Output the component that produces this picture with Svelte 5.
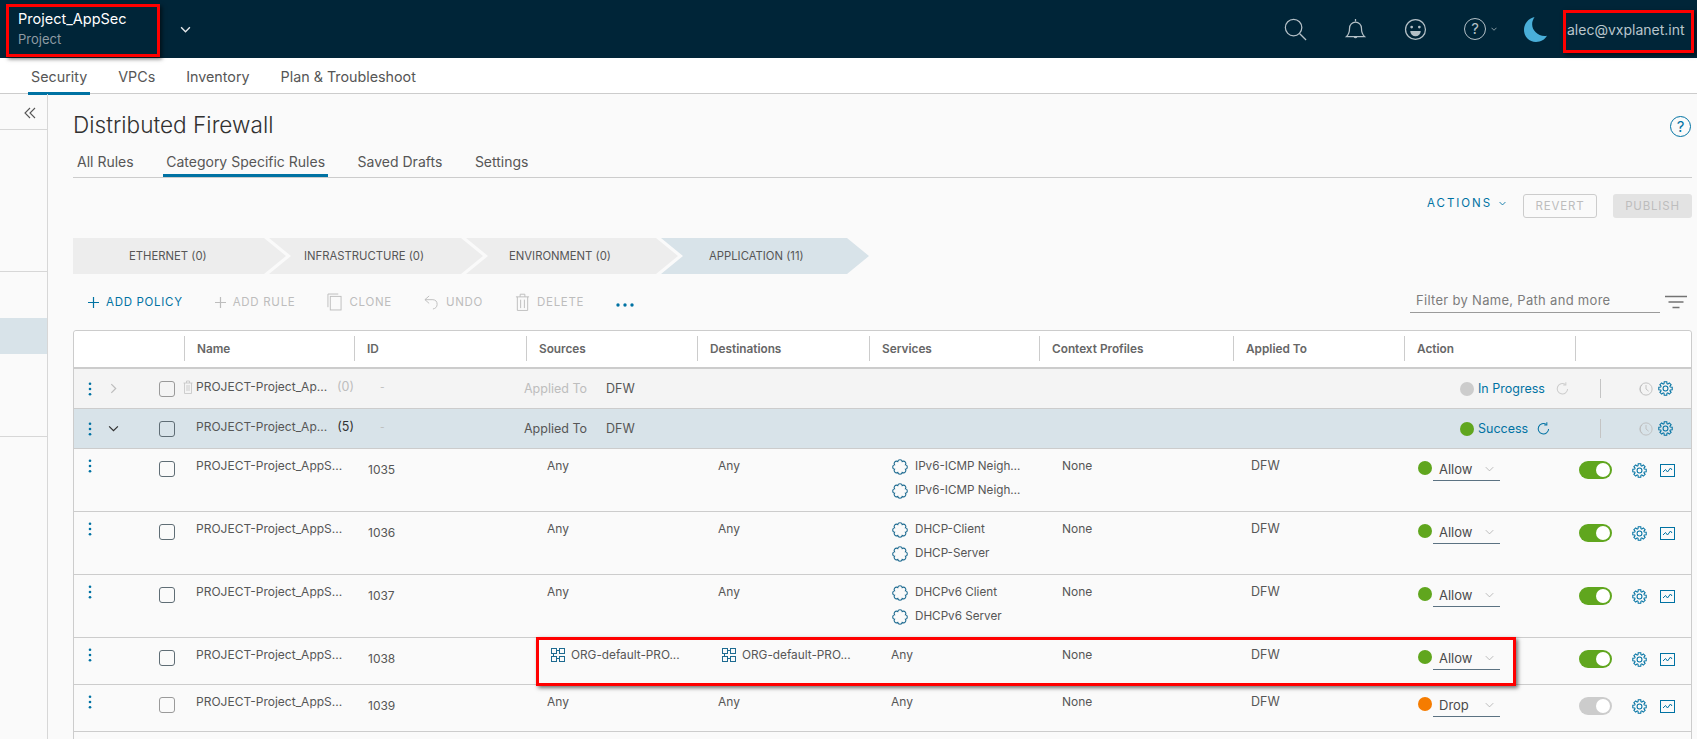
<script>
  function polar(cx, cy, r, a) {
    const t = (a * Math.PI) / 180;
    return `${(cx + r * Math.cos(t)).toFixed(2)} ${(cy + r * Math.sin(t)).toFixed(2)}`;
  }
  function gearPath() {
    let d = '';
    for (let i = 0; i < 8; i++) {
      const a = i * 45;
      d += `${i ? 'L' : 'M'}${polar(8, 8, 5.3, a - 17)} L${polar(8, 8, 7.3, a - 11)} L${polar(8, 8, 7.3, a + 11)} L${polar(8, 8, 5.3, a + 17)} `;
    }
    return d + 'Z';
  }
  function scallopPath() {
    let d = '';
    const n = 8;
    for (let i = 0; i <= n; i++) {
      const p = polar(8, 8, 5.9, (i * 360) / n + 22.5);
      d += i === 0 ? `M${p} ` : `A2.3 2.3 0 0 1 ${p} `;
    }
    return d + 'Z';
  }
  const gear = gearPath();
  const scallop = scallopPath();

  const navItems = ['Security', 'VPCs', 'Inventory', 'Plan & Troubleshoot'];
  const tabs = ['All Rules', 'Category Specific Rules', 'Saved Drafts', 'Settings'];
  const crumbs = [
    { label: 'ETHERNET (0)', cls: 'c1' },
    { label: 'INFRASTRUCTURE (0)', cls: 'c2' },
    { label: 'ENVIRONMENT (0)', cls: 'c3' },
    { label: 'APPLICATION (11)', cls: 'c4' }
  ];
  const columns = ['Name', 'ID', 'Sources', 'Destinations', 'Services', 'Context Profiles', 'Applied To', 'Action', ''];
  const rules = [
    { id: '1035', src: null, dst: null, svc: ['IPv6-ICMP Neigh…', 'IPv6-ICMP Neigh…'], action: 'Allow', on: true, size: 'tall' },
    { id: '1036', src: null, dst: null, svc: ['DHCP-Client', 'DHCP-Server'], action: 'Allow', on: true, size: 'tall' },
    { id: '1037', src: null, dst: null, svc: ['DHCPv6 Client', 'DHCPv6 Server'], action: 'Allow', on: true, size: 'tall' },
    { id: '1038', src: 'ORG-default-PRO...', dst: 'ORG-default-PRO...', svc: [], action: 'Allow', on: true, size: 'short' },
    { id: '1039', src: null, dst: null, svc: [], action: 'Drop', on: false, size: 'shorter' }
  ];
</script>

{#snippet dots()}
  <svg class="dots" viewBox="0 0 4 16"><circle cx="2" cy="2" r="1.5" /><circle cx="2" cy="8" r="1.5" /><circle cx="2" cy="14" r="1.5" /></svg>
{/snippet}
{#snippet gearIcon()}
  <svg class="gear" viewBox="0 0 16 16"><path d={gear} /><circle cx="8" cy="8" r="2.6" /></svg>
{/snippet}
{#snippet clock()}
  <svg class="clock" viewBox="0 0 16 16"><circle cx="8" cy="8" r="7" /><path d="M3.5 3.2A6.5 6.5 0 0 0 3.5 12.8" /><path d="M8 3.5V8l3 2.5" /></svg>
{/snippet}
{#snippet refresh()}
  <svg class="refresh" viewBox="0 0 14 14"><path d="M12.5 7.5A5.6 5.6 0 1 1 10 2.6" /><path d="M10.6 .4V3.2H7.8" /></svg>
{/snippet}
{#snippet chev(cls)}
  <svg class={cls} viewBox="0 0 12 8"><path d="M1 1.5l5 5 5-5" /></svg>
{/snippet}

<div class="shell">
  <header class="top">
    <div class="project">
      <div class="pname">Project_AppSec</div>
      <div class="ptype">Project</div>
    </div>
    {@render chev('pchev')}
    <div class="hicons">
      <svg class="hi" viewBox="0 0 24 24"><circle cx="10" cy="10" r="8.6" /><path d="M16.2 16.2L23 23" /></svg>
      <svg class="hi" viewBox="0 0 24 24"><path d="M12 1v2.4M2.5 19.5c2.4-2.2 3.3-4.3 3.3-9a6.2 6.2 0 0 1 12.4 0c0 4.7.9 6.8 3.3 9zM10.5 19.5a1.7 1.7 0 0 0 3 0" /></svg>
      <svg class="hi" viewBox="0 0 24 24"><circle cx="12" cy="12" r="10.4" /><circle class="solid" cx="8" cy="9.5" r="1.4" /><circle class="solid" cx="16" cy="9.5" r="1.4" /><path class="solid" d="M6.5 13.5h11a5.5 5.5 0 0 1-11 0z" /></svg>
      <div class="helpwrap">
        <span class="helpq">?</span>
        {@render chev('hchev')}
      </div>
      <svg class="moon" viewBox="0 0 24 26"><path d="M11 0C4.5 1.500 0 7 0 13.500 0 20.500 5.500 26 12.500 26 17.500 26 21.800 23.500 24 19.500 15.500 21 8.500 14.500 8.500 7.500 8.500 4.800 9.500 2.200 11 0z" /></svg>
    </div>
    <div class="user">alec@vxplanet.int</div>
  </header>

  <nav class="nav">
    {#each navItems as item, i}
      <span class="navitem" class:active={i === 0}>{item}</span>
    {/each}
  </nav>

  <div class="body">
    <aside class="side">
      <div class="collapse">
        <svg viewBox="0 0 12 12"><path d="M6 1L1 6l5 5M11 1L6 6l5 5" /></svg>
      </div>
      <div class="sblock a"></div>
      <div class="sblock b"><div class="shigh"></div></div>
    </aside>

    <main class="main">
      <div class="titlerow">
        <h1>Distributed Firewall</h1>
        <span class="bighelp">?</span>
      </div>
      <div class="tabs">
        {#each tabs as t, i}
          <span class="tab" class:active={i === 1}>{t}</span>
        {/each}
      </div>

      <div class="actions">
        <span class="actlink">ACTIONS {@render chev('achev')}</span>
        <span class="btn revert">REVERT</span>
        <span class="btn publish">PUBLISH</span>
      </div>

      <div class="crumbs">
        {#each crumbs as c}
          <div class="crumb {c.cls}">{c.label}</div>
        {/each}
      </div>

      <div class="toolbar">
        <span class="tool on">
          <svg class="plus" viewBox="0 0 11 11"><path d="M5.5 0v11M0 5.5h11" /></svg>ADD POLICY
        </span>
        <span class="tool">
          <svg class="plus" viewBox="0 0 11 11"><path d="M5.5 0v11M0 5.5h11" /></svg>ADD RULE
        </span>
        <span class="tool">
          <svg class="ticon" viewBox="0 0 16 19"><path d="M1 15V1h11" /><rect x="3.5" y="3.5" width="11.5" height="14.5" /></svg>CLONE
        </span>
        <span class="tool">
          <svg class="ticon" viewBox="0 0 16 19"><path d="M5.5 3L1 7l4.5 4M1 7h8.5a5 5 0 0 1 4.5 5c0 3-2 4.5-4.5 5" /></svg>UNDO
        </span>
        <span class="tool">
          <svg class="ticon" viewBox="0 0 16 19"><path d="M1 4h14M5.5 4V1.200h5V4M2.5 4v14.5h11V4M6 7v9M10 7v9" /></svg>DELETE
        </span>
        <svg class="more" viewBox="0 0 18 4"><circle cx="2" cy="2" r="1.700" /><circle cx="9" cy="2" r="1.700" /><circle cx="16" cy="2" r="1.700" /></svg>
        <div class="filter">Filter by Name, Path and more</div>
        <svg class="filtericon" viewBox="0 0 22 14"><path d="M0 1.5h22M3.5 7h15M7.5 12.5h7" /></svg>
      </div>

      <div class="table">
        <div class="grid head">
          <div class="hcell first"></div>
          {#each columns as c}
            <div class="hcell">{c}</div>
          {/each}
        </div>

        <div class="grid group progress">
          <div class="tools">{@render dots()}{@render chev('rowchev right')}<span class="check"></span></div>
          <div class="gname withtrash">
            <svg class="trash" viewBox="0 0 10 14"><path d="M.5 3h9M3.5 3V1h3v2M1.5 3v10.500h7V3M4 5v6M6 5v6" /></svg>
            <span class="gtext">PROJECT-Project_Ap...</span><span class="count">(0)</span>
          </div>
          <div class="gid">-</div>
          <div class="applied"><span class="al">Applied To</span><span class="av">DFW</span></div>
          <div class="spacer"></div>
          <div class="status"><span class="dot grey"></span><span class="stext">In Progress</span>{@render refresh()}</div>
          <div class="gtools"><span class="vr"></span>{@render clock()}{@render gearIcon()}</div>
        </div>

        <div class="grid group success">
          <div class="tools">{@render dots()}{@render chev('rowchev')}<span class="check strong"></span></div>
          <div class="gname">
            <span class="gtext">PROJECT-Project_Ap...</span><span class="count">(5)</span>
          </div>
          <div class="gid">-</div>
          <div class="applied"><span class="al">Applied To</span><span class="av">DFW</span></div>
          <div class="spacer"></div>
          <div class="status"><span class="dot green"></span><span class="stext">Success</span>{@render refresh()}</div>
          <div class="gtools"><span class="vr"></span>{@render clock()}{@render gearIcon()}</div>
        </div>

        {#each rules as r}
          <div class="grid rule {r.size}">
            <div class="tools">{@render dots()}<span></span><span class="check" class:strong={r.on} ></span></div>
            <div class="cell name">PROJECT-Project_AppS...</div>
            <div class="cell idc">{r.id}</div>
            {#if r.src}
              <div class="cell org"><svg class="orgi" viewBox="0 0 15 15"><path d="M1 1h5v5H1zM9 1h5v5H9zM1 9h5v5H1zM9 9h5v5H9zM6 3.5h3M6 11.5h3M3.500 6v3" /></svg>{r.src}</div>
              <div class="cell org"><svg class="orgi" viewBox="0 0 15 15"><path d="M1 1h5v5H1zM9 1h5v5H9zM1 9h5v5H1zM9 9h5v5H9zM6 3.5h3M6 11.5h3M3.500 6v3" /></svg>{r.dst}</div>
            {:else}
              <div class="cell">Any</div>
              <div class="cell">Any</div>
            {/if}
            {#if r.svc.length}
              <div class="cell svc">
                {#each r.svc as s}
                  <div class="svcline"><svg class="svci" viewBox="0 0 16 16"><path d={scallop} /></svg>{s}</div>
                {/each}
              </div>
            {:else}
              <div class="cell svcany">Any</div>
            {/if}
            <div class="cell ctx">None</div>
            <div class="cell app">DFW</div>
            <div class="actcell">
              <span class="dot" class:green={r.on} class:orange={!r.on}></span>
              <span class="select">{r.action}{@render chev('schev')}</span>
            </div>
            <div class="rtools">
              <span class="toggle" class:off={!r.on}></span>
              {@render gearIcon()}
              <svg class="chart" viewBox="0 0 15 13"><rect x=".5" y=".5" width="14" height="12" /><path d="M3 8l2.5-2.5L7.5 8l3-4 1.500 2" /></svg>
            </div>
          </div>
        {/each}
      </div>
    </main>
  </div>

  <div class="callout c-project"></div>
  <div class="callout c-user"></div>
  <div class="callout c-row"></div>
</div>

<style>
  :global(body) { margin: 0; }
  .shell {
    position: relative;
    width: 1697px;
    height: 739px;
    overflow: hidden;
    background: #fafafa;
    font-family: Inter, "Liberation Sans", sans-serif;
    color: #565656;
    font-size: 12px;
  }
  svg { display: block; flex: none; fill: none; }

  .top { height: 58px; background: #002538; display: flex; align-items: center; }
  .project { padding-left: 18px; width: 180px; box-sizing: border-box; }
  .pname { color: #fff; font-size: 14.5px; line-height: 20px; margin-top: -1px; }
  .ptype { color: #8e9ba3; font-size: 13px; line-height: 20px; }
  :global(.pchev) { width: 11px; height: 7px; stroke: #e6e9eb; stroke-width: 1.6; }
  .hicons { margin-left: 1093px; display: flex; align-items: center; }
  .hi { width: 23px; height: 23px; margin-right: 37px; stroke: #b4c0c7; stroke-width: 1.3; }
  .hi .solid { fill: #b4c0c7; stroke: none; }
  .helpwrap { display: flex; align-items: center; width: 60px; }
  .helpq {
    width: 20px; height: 20px; border: 1.3px solid #b4c0c7; border-radius: 50%;
    color: #b4c0c7; font-size: 15px; line-height: 20px; text-align: center;
  }
  :global(.hchev) { width: 6px; height: 4px; margin-left: 5px; stroke: #b4c0c7; stroke-width: 1.5; }
  .moon { width: 23px; height: 25px; fill: #49afd9; margin-right: 20px; }
  .user { color: #b9c5cc; font-size: 14px; white-space: nowrap; }

  .nav {
    height: 35px; background: #fff; border-bottom: 1px solid #ccc;
    display: flex; align-items: stretch; font-size: 14.3px;
  }
  .navitem { display: flex; align-items: center; padding: 0 3px; margin-right: 25px; border-bottom: 3px solid transparent; height: 32px; padding-top: 2px; box-sizing: content-box; }
  .navitem:first-child { margin-left: 28px; }
  .navitem.active { border-bottom-color: #0072a3; }

  .body { display: flex; height: 645px; }
  .side { width: 48px; flex: none; border-right: 1px solid #d7d7d7; box-sizing: border-box; }
  .collapse { height: 36px; border-bottom: 1px solid #d7d7d7; box-sizing: border-box; display: flex; align-items: center; justify-content: flex-end; padding-right: 11px; padding-top: 2px; }
  .collapse svg { width: 12px; height: 12px; stroke: #565656; stroke-width: 1.1; }
  .sblock.a { height: 142px; border-bottom: 1px solid #d7d7d7; box-sizing: border-box; }
  .sblock.b { height: 165px; padding-top: 46px; box-sizing: border-box; border-bottom: 1px solid #d7d7d7; }
  .shigh { height: 36px; background: #d8e3e9; }

  .main { flex: 1; min-width: 0; padding: 0 5px 0 25px; }
  .titlerow { height: 54px; box-sizing: border-box; padding-top: 6px; display: flex; align-items: center; justify-content: space-between; }
  h1 { margin: 0; font-size: 22.6px; font-weight: 300; color: #313131; }
  .bighelp {
    width: 19px; height: 19px; border: 1.5px solid #0072a3; border-radius: 50%;
    color: #0072a3; font-size: 15px; line-height: 19px; text-align: center; margin-top: 4px; margin-right: 1px;
  }
  .tabs { height: 30px; box-sizing: border-box; border-bottom: 1px solid #ccc; display: flex; font-size: 14px; padding-left: 1px; }
  .tab { display: flex; align-items: center; padding: 1px 3px 0; margin-right: 26.6px; height: 29px; box-sizing: border-box; border-bottom: 3px solid transparent; }
  .tab.active { border-bottom-color: #0072a3; }

  .actions { padding-top: 16px; height: 24px; display: flex; justify-content: flex-end; align-items: flex-start; }
  .actlink { color: #0072a3; font-size: 11.5px; letter-spacing: 1.95px; display: flex; align-items: center; gap: 7px; margin-right: 17px; padding-top: 2px; }
  :global(.achev) { width: 7px; height: 5px; stroke: #0072a3; stroke-width: 1.5; }
  .btn { height: 24px; box-sizing: border-box; display: flex; align-items: center; justify-content: center; font-size: 11.5px; letter-spacing: .8px; border-radius: 3px; color: #bdbdbd; }
  .revert { width: 74px; border: 1px solid #ccc; margin-right: 16px; }
  .publish { width: 79px; background: #e3e3e3; }

  .crumbs { display: flex; margin-top: 20px; height: 36px; font-size: 11.3px; }
  .crumb { height: 36px; display: flex; align-items: center; box-sizing: border-box; background: #ededed; white-space: nowrap; }
  .crumb + .crumb { margin-left: -17px; }
  .c1 { width: 213px; padding-left: 56px; clip-path: polygon(0 0, 191px 0, 100% 50%, 191px 100%, 0 100%); }
  .c2 { width: 214px; padding-left: 35px; clip-path: polygon(0 0, 192px 0, 100% 50%, 192px 100%, 0 100%, 22px 50%); }
  .c3 { width: 212px; padding-left: 43px; clip-path: polygon(0 0, 190px 0, 100% 50%, 190px 100%, 0 100%, 22px 50%); }
  .c4 { width: 208px; padding-left: 48px; background: #d8e3e9; clip-path: polygon(0 0, 186px 0, 100% 50%, 186px 100%, 0 100%, 22px 50%); }

  .toolbar { height: 56px; display: flex; align-items: center; padding-left: 15px; font-size: 11.5px; letter-spacing: .7px; }
  .tool { display: flex; align-items: center; gap: 7px; margin-right: 32px; color: #bdbdbd; white-space: nowrap; }
  .tool.on { color: #0072a3; }
  .plus { width: 11px; height: 11px; stroke: #bdbdbd; stroke-width: 1.2; }
  .tool.on .plus { stroke: #0072a3; }
  .ticon { width: 15px; height: 18px; stroke: #bdbdbd; stroke-width: 1; }
  .more { width: 18px; height: 4px; fill: #0072a3; margin-top: 6px; }
  .filter {
    margin-left: auto; width: 250px; box-sizing: border-box; height: 24px; padding-left: 6px;
    border-bottom: 1px solid #9a9a9a; font-size: 13px; letter-spacing: .3px; color: #7c7c7c; white-space: nowrap;
    display: flex; align-items: center; margin-top: -3px;
  }
  .filtericon { width: 22px; height: 14px; stroke: #737373; stroke-width: 1.5; margin-left: 5px; margin-right: 5px; }

  .table { border: 1px solid #ccc; border-radius: 3px; background: #fafafa; height: 500px; box-sizing: border-box; }
  .grid {
    display: grid;
    grid-template-columns: 110px 170px 172px 171px 172px 170px 194px 171px 171px 1fr;
  }
  .head { height: 38px; background: #fff; border-bottom: 2px solid #ccc; align-items: center; border-radius: 3px 3px 0 0; box-sizing: border-box; padding-bottom: 1px; }
  .hcell { height: 25px; border-left: 1px solid #ccc; padding-left: 12px; display: flex; align-items: center; font-size: 11.8px; font-weight: 600; color: #666; box-sizing: border-box; }
  .hcell.first { border-left: 0; }

  .group { height: 40px; box-sizing: border-box; border-bottom: 1px solid #ccc; align-items: center; grid-template-columns: 110px 170px 172px 171px 707px 171px 1fr; }
  .progress { background: #f4f4f4; }
  .success { background: #d8e3e9; }

  .tools { display: grid; grid-template-columns: 20px 51px 16px; padding-left: 14px; align-items: start; }
  .group .tools { align-items: center; }
  .rule .tools { padding-top: 10px; }
  .rule .check { margin-top: 2px; }
  .dots { width: 4px; height: 14px; fill: #0072a3; }
  :global(.rowchev) { width: 11px; height: 7px; stroke: #313131; stroke-width: 1.4; }
  :global(.rowchev.right) { transform: rotate(-90deg); stroke: #bdbdbd; }
  .check { width: 16px; height: 16px; box-sizing: border-box; border: 1px solid #9a9a9a; border-radius: 3px; }
  .check.strong { border-color: #5f6d75; }

  .gname { display: flex; align-items: center; padding-left: 12px; font-size: 12px; margin-top: -4px; }
  .gname.withtrash { padding-left: 0; }
  .trash { width: 10px; height: 14px; stroke: #c4c4c4; stroke-width: .8; margin-right: 3px; margin-left: -1px; }
  .gtext { width: 143px; white-space: nowrap; }
  .count { color: #313131; font-size: 12.5px; margin-left: 3px; }
  .progress .count { color: #bdbdbd; margin-left: 2px; }
  .gid { padding-left: 26px; color: #bbb; margin-top: -3px; font-size: 10px; }
  .applied { display: flex; font-size: 12.5px; margin-left: -2px; white-space: nowrap; }
  .al { width: 82px; }
  .progress .al { color: #bdbdbd; }
  .status { display: flex; align-items: center; padding-left: 56px; font-size: 12.5px; color: #0072a3; white-space: nowrap; }
  .stext { margin-left: 4px; margin-right: 9px; }
  .progress .stext { margin-right: 11px; }
  :global(.refresh) { width: 13px; height: 13px; stroke: #0072a3; stroke-width: 1.1; }
  .progress :global(.refresh) { stroke: #ccc; }
  .gtools { display: flex; align-items: center; padding-left: 25px; }
  .vr { width: 1px; height: 19px; background: #c4c4c4; margin-right: 38px; }
  :global(.clock) { width: 14px; height: 14px; stroke: #bdbdbd; stroke-width: 1; margin-right: 5px; }
  :global(.gear) { width: 15px; height: 15px; stroke: #0072a3; stroke-width: 1.1; }

  .dot { width: 14px; height: 14px; border-radius: 50%; flex: none; }
  .dot.grey { background: #ccc; }
  .dot.green { background: #60a61e; }
  .dot.orange { background: #f57c00; }

  .rule { border-bottom: 1px solid #ccc; box-sizing: border-box; align-items: start; }
  .tall { height: 63px; }
  .short { height: 47px; }
  .shorter { height: 47px; }
  .cell { padding: 9px 0 0 21px; font-size: 12px; line-height: 16px; white-space: nowrap; }
  .cell.name { padding-left: 12px; }
  .cell.idc { padding-left: 14px; padding-top: 13px; font-size: 12px; }
  .cell.org { padding-left: 24px; display: flex; align-items: flex-start; gap: 6px; font-size: 11.8px; }
  .orgi { width: 15px; height: 15px; stroke: #1d6a90; stroke-width: 1; shape-rendering: crispEdges; }
  .cell.svc { padding-left: 23px; padding-top: 9px; font-size: 11.7px; }
  .cell.svcany { padding-left: 22px; }
  .svcline { height: 24px; display: flex; align-items: flex-start; gap: 7px; }
  .svci { width: 16px; height: 16px; stroke: #1d6a90; stroke-width: 1.1; margin-top: 1px; }
  .cell.ctx { padding-left: 23px; }
  .cell.app { padding-left: 18px; font-size: 12.5px; }
  .actcell { display: flex; align-items: flex-start; padding-left: 14px; padding-top: 11px; }
  .actcell .dot { margin-top: 1px; }
  .select {
    margin-left: 1px; width: 67px; height: 21px; box-sizing: border-box; border-bottom: 1px solid #5b7282;
    padding: 0 6px 2px 6px; display: flex; align-items: center; justify-content: space-between;
    font-size: 13px; color: #4a4a4a;
  }
  :global(.schev) { width: 9px; height: 6px; stroke: #a8a8a8; stroke-width: 1; }
  .rtools { display: flex; align-items: center; padding: 12px 0 0 4px; }
  .toggle {
    position: relative; width: 33px; height: 18px; border-radius: 9px; background: #60a61e; margin-right: 20px; flex: none;
  }
  .toggle::after {
    content: ''; position: absolute; right: 2px; top: 2px; width: 14px; height: 14px; border-radius: 50%; background: #fff;
  }
  .toggle.off { background: #ccc; }
  .chart { width: 15px; height: 13px; stroke: #0072a3; stroke-width: 1; margin-left: 13px; }

  .callout { position: absolute; box-sizing: border-box; border: 3px solid #f00; box-shadow: 2px 2px 4px rgba(0, 0, 0, .55); }
  .c-project { left: 6px; top: 4px; width: 154px; height: 53px; }
  .c-user { left: 1563px; top: 10px; width: 131px; height: 43px; }
  .c-row { left: 536px; top: 637px; width: 980px; height: 49px; }
</style>
